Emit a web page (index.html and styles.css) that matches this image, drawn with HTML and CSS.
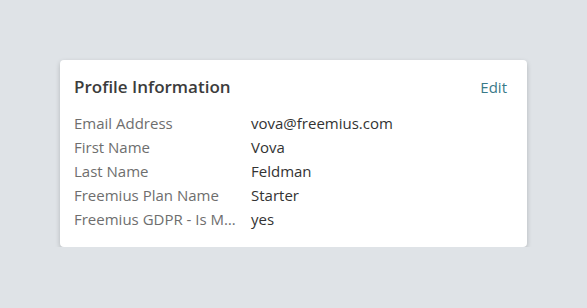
FILE: index.html
```html
<!DOCTYPE html>
<html>
<head>
<meta charset="utf-8">
<link rel="stylesheet" href="styles.css">
</head>
<body>
<div class="card">
  <div class="card-header">
    <h2 class="title">Profile Information</h2>
    <a class="edit" href="#">Edit</a>
  </div>
  <div class="rows">
    <div class="row"><span class="label">Email Address</span><span class="value">vova@freemius.com</span></div>
    <div class="row"><span class="label">First Name</span><span class="value">Vova</span></div>
    <div class="row"><span class="label">Last Name</span><span class="value">Feldman</span></div>
    <div class="row"><span class="label">Freemius Plan Name</span><span class="value">Starter</span></div>
    <div class="row"><span class="label">Freemius GDPR - Is Marketing Allowed</span><span class="value">yes</span></div>
  </div>
</div>
</body>
</html>
```
FILE: styles.css
```css
html, body {
  margin: 0;
  padding: 0;
}
body {
  background: #dfe3e7;
  font-family: "Open Sans", "Noto Sans", sans-serif;
  padding: 60px 60px 0 60px;
}
.card {
  width: 467px;
  height: 187px;
  box-sizing: border-box;
  background: #fff;
  border-radius: 4px;
  box-shadow: 0 2px 5px rgba(0, 0, 0, 0.2);
  padding: 15px 20px 15px 14px;
}
.card-header {
  display: flex;
  justify-content: space-between;
  align-items: center;
  height: 24px;
}
.title {
  margin: 0;
  font-size: 17px;
  font-weight: 600;
  color: #3c3c3c;
  line-height: 24px;
}
.edit {
  color: #3a7a88;
  text-decoration: none;
  font-size: 15px;
  line-height: 24px;
}
.rows {
  margin-top: 12px;
}
.row {
  display: flex;
  font-size: 15px;
  line-height: 24px;
}
.label {
  width: 165px;
  margin-right: 12px;
  color: #6e6e6e;
  white-space: nowrap;
  overflow: hidden;
  text-overflow: ellipsis;
}
.value {
  color: #333;
}
```
